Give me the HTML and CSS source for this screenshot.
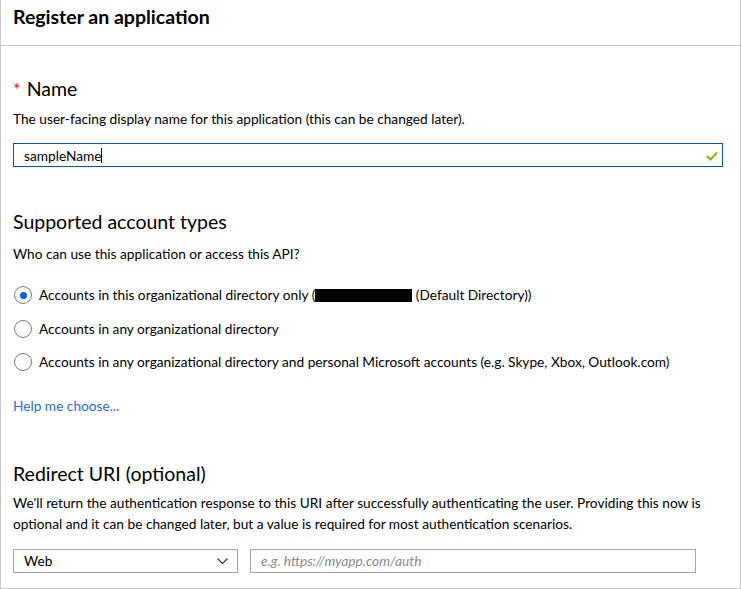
FILE: index.html
```html
<!DOCTYPE html>
<html lang="en">
<head>
<meta charset="utf-8">
<title>Register an application</title>
<link rel="stylesheet" href="styles.css">
</head>
<body>
<div class="frame">
  <header class="header">Register an application</header>
  <main class="content">
    <h2 class="heading name-heading"><span class="req">*</span>Name</h2>
    <p class="desc">The user-facing display name for this application (this can be changed later).</p>
    <div class="textbox valid">
      <span class="value">sampleName</span><span class="caret"></span>
      <svg class="check" width="12" height="10" viewBox="0 0 12 10"><polyline points="1,5 4.5,8.5 11,1.5" fill="none" stroke="#7fba00" stroke-width="2"/></svg>
    </div>

    <h2 class="heading sat">Supported account types</h2>
    <p class="desc who">Who can use this application or access this API?</p>
    <div class="radios">
      <label class="radio-row"><span class="radio checked"></span><span>Accounts in this organizational directory only (<span class="redact"></span> (Default Directory))</span></label>
      <label class="radio-row"><span class="radio"></span><span>Accounts in any organizational directory</span></label>
      <label class="radio-row"><span class="radio"></span><span>Accounts in any organizational directory and personal Microsoft accounts (e.g. Skype, Xbox, Outlook.com)</span></label>
    </div>
    <a class="link" href="#">Help me choose...</a>

    <h2 class="heading redirect">Redirect URI (optional)</h2>
    <p class="desc two">We'll return the authentication response to this URI after successfully authenticating the user. Providing this now is optional and it can be changed later, but a value is required for most authentication scenarios.</p>
    <div class="uri-row">
      <div class="select"><span>Web</span>
        <svg class="chev" width="11" height="6" viewBox="0 0 11 6"><polyline points="0.5,0.5 5.5,5.5 10.5,0.5" fill="none" stroke="#333" stroke-width="1.1"/></svg>
      </div>
      <div class="textbox uri"><span class="placeholder">e.g. https://myapp.com/auth</span></div>
    </div>
  </main>
</div>
</body>
</html>
```

FILE: styles.css
```css
* { box-sizing: border-box; }
html, body { margin: 0; padding: 0; background: #fff; }
body {
  font-family: "Lato", "Segoe UI", "Liberation Sans", sans-serif;
  font-size: 13.7px;
  color: #000;
}
.frame {
  width: 741px;
  height: 589px;
  border-left: 1px solid #c8c8c8;
  border-right: 1px solid #c8c8c8;
  border-bottom: 1px solid #c8c8c8;
  overflow: hidden;
}
.header {
  height: 46px;
  border-bottom: 1px solid #c8c8c8;
  padding-left: 12px;
  font-size: 19.5px;
  font-weight: 700;
  line-height: 34px;
}
.content {
  padding: 0 17px 0 12px;
}
.heading {
  margin: 0;
  font-size: 19.5px;
  font-weight: 400;
  line-height: 28px;
}
.name-heading { margin-top: 29px; }
.req { color: #e00b1c; font-size: 18px; margin-right: 6px; }
.desc {
  margin: 6px 0 0;
  line-height: 20px;
}
.textbox {
  position: relative;
  height: 24px;
  border: 1px solid #a6a6a6;
  display: flex;
  align-items: center;
  padding-left: 10px;
}
.textbox.valid {
  margin-top: 14px;
  border-color: #0058ad;
}
.caret {
  display: inline-block;
  width: 1px;
  height: 15px;
  background: #000;
}
.check {
  position: absolute;
  right: 4px;
  top: 7px;
}
.sat { margin-top: 41px; }
.who { margin-top: 8px; }
.radios {
  margin-top: 21px;
  display: flex;
  flex-direction: column;
  gap: 13.5px;
}
.radio-row {
  display: flex;
  align-items: center;
  line-height: 20px;
  gap: 7px;
  padding-left: 1px;
}
.radio {
  width: 18px;
  height: 18px;
  border: 1px solid #7a7a7a;
  border-radius: 50%;
  flex: none;
  display: flex;
  align-items: center;
  justify-content: center;
}
.radio.checked::after {
  content: "";
  width: 7px;
  height: 7px;
  border-radius: 50%;
  background: #0063d6;
}
.redact {
  display: inline-block;
  width: 97px;
  height: 13px;
  background: #000;
  vertical-align: -2px;
}
.link {
  display: block;
  margin-top: 23.5px;
  line-height: 20px;
  color: #2b6ad6;
  text-decoration: none;
}
.redirect { margin-top: 44px; }
.two { margin-top: 4.5px; line-height: 21px; }
.uri-row {
  margin-top: 14.5px;
  display: flex;
  gap: 12px;
}
.select {
  width: 225px;
  height: 24px;
  border: 1px solid #a6a6a6;
  display: flex;
  align-items: center;
  justify-content: space-between;
  padding: 0 9px 0 10px;
}
.textbox.uri { width: 446px; }
.placeholder { color: #8a8a8a; font-style: italic; }
```
